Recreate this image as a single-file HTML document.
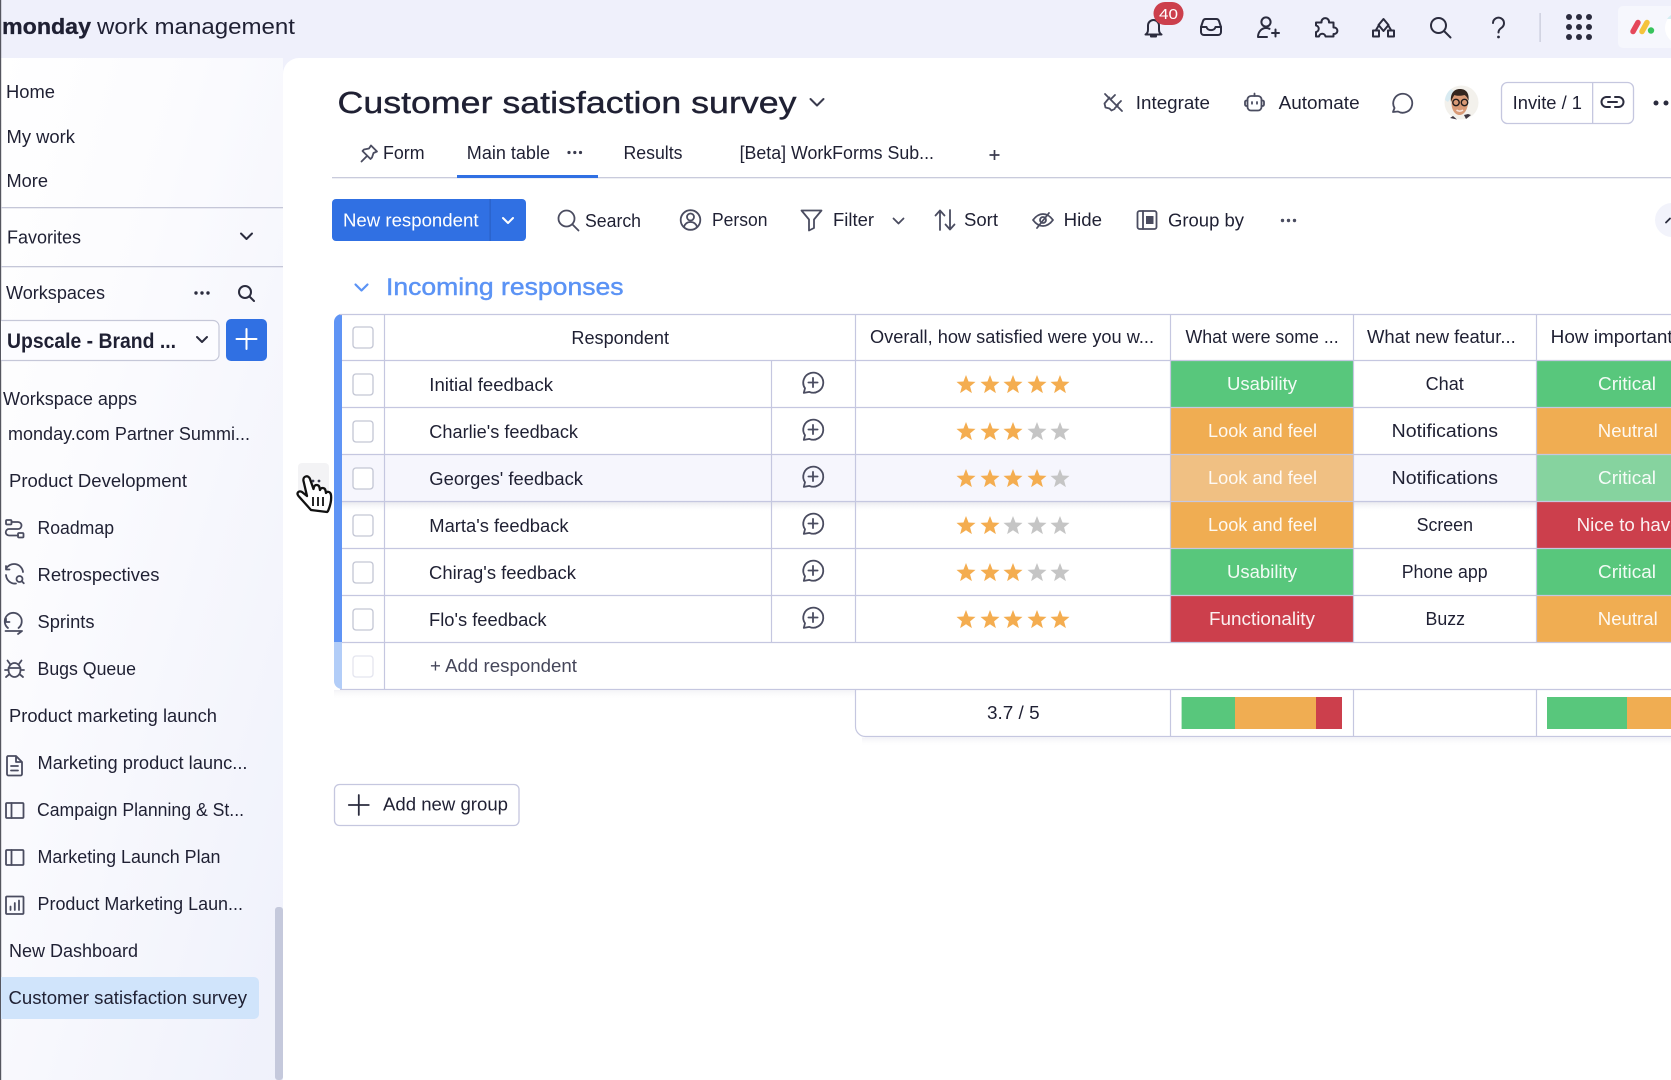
<!DOCTYPE html>
<html lang="en"><head><meta charset="utf-8"><title>Customer satisfaction survey</title>
<style>
html,body{margin:0;padding:0;background:#fff;width:1671px;height:1080px;overflow:hidden}
svg{display:block}
text{font-family:"Liberation Sans",sans-serif;font-size:18px;fill:#1f2033}
.w{fill:#fff;fill-opacity:.92}
.i{fill:none;stroke:#2b2c3e;stroke-width:2;stroke-linecap:round;stroke-linejoin:round}
.g{fill:none;stroke:#4a4c60;stroke-width:1.8;stroke-linecap:round;stroke-linejoin:round}
.l{fill:none;stroke:#c5c7e0;stroke-width:1.2}
.cb{fill:#fff;stroke:#c3c6d4;stroke-width:1.3}
.on{fill:#f4ad50}.off{fill:#c5c5c5}
</style></head><body>
<svg width="1671" height="1080" viewBox="0 0 1671 1080" xmlns="http://www.w3.org/2000/svg">
<defs>
<linearGradient id="sb" x1="0" y1="0" x2="1" y2="1"><stop offset="0" stop-color="#ffffff"/><stop offset=".35" stop-color="#fbfbfe"/><stop offset="1" stop-color="#eff1fb"/></linearGradient>
<linearGradient id="sh" x1="0" y1="0" x2="0" y2="1"><stop offset="0" stop-color="#e9e9ee"/><stop offset="1" stop-color="#ffffff" stop-opacity="0"/></linearGradient>
<linearGradient id="sh2" x1="0" y1="0" x2="0" y2="1"><stop offset="0" stop-color="#f2f2f6"/><stop offset="1" stop-color="#ffffff" stop-opacity="0"/></linearGradient>
<polygon id="star" points="0,-10 2.53,-3.48 9.51,-3.09 4.09,1.33 5.88,8.09 0,4.3 -5.88,8.09 -4.09,1.33 -9.51,-3.09 -2.53,-3.48"/>
<g id="cp" class="g"><path d="M-9.2 10.4 L-8 5.8 A10 10 0 1 1 -3.6 9.4 Z"/><path d="M0 -4.6V4.6M-4.6 0H4.6"/></g>
<g id="ck"><rect x="-10" y="-10.5" width="20" height="21" rx="3" class="cb"/></g>
</defs>

<!-- backgrounds -->
<rect width="1671" height="1080" fill="#fff"/>
<rect width="1671" height="58" fill="#eff0fb"/>
<rect y="58" width="283" height="1022" fill="url(#sb)"/>
<path d="M283 58h16a16 16 0 0 0-16 16z" fill="#eff0fb"/>
<rect x="0" y="0" width="1.2" height="1080" fill="#55565f"/>

<!-- top bar -->
<text x="2" y="34" textLength="89" lengthAdjust="spacingAndGlyphs" stroke="#1f2033" stroke-width=".3" style="font-size:22px;font-weight:700">monday</text>
<text x="97" y="34" textLength="198" lengthAdjust="spacingAndGlyphs" style="font-size:22px">work management</text>
<g class="i">
<path d="M1145.5 34.5c2-1 2.5-3 2.5-5v-4a5.5 5.5 0 0 1 11 0v4c0 2 .5 4 2.5 5z"/><path d="M1151 35v1.5h5V35"/>
<path d="M1201 27v5a3 3 0 0 0 3 3h14a3 3 0 0 0 3-3v-5l-2-6a3 3 0 0 0-3-2h-10a3 3 0 0 0-3 2z"/><path d="M1201 27h5.5a4.6 4 0 0 0 9 0h5.5"/>
<circle cx="1266" cy="22" r="4.6"/><path d="M1258 37c0-5 3.5-9 8-9 1.5 0 2.5.3 3.5.8M1258 37h9"/><path d="M1272 33h7M1275.5 29.5v7"/>
<path d="M1316 22.5h5.500a3.800 3.800 0 1 1 7.500 0h4.500v5a3.300 3.300 0 1 1 0 6.500v2.500h-8a3.300 3.300 0 0 0-6.500 0h-3v-4.500a3.300 3.300 0 0 0 0-6.500z"/>
<path d="M1383.5 19l5 6-5 6-5-6z"/><rect x="1373" y="30.5" width="6" height="6"/><rect x="1388" y="30.5" width="6" height="6"/><path d="M1376 30l3-5M1391 30l-3-5"/>
<circle cx="1438.5" cy="25.5" r="7.5"/><path d="M1444 31l6.500 6.500"/>
<path d="M1493 23a5.500 5.500 0 1 1 8.500 4.800c-2 1.300-3 2.400-3 4.700"/>
</g>
<circle cx="1498.5" cy="37" r="1.4" fill="#2b2c3e"/>
<rect x="1153.5" y="2" width="30" height="23" rx="11.5" fill="#cc3f4c"/>
<text x="1159" y="19" textLength="19" lengthAdjust="spacingAndGlyphs" style="font-size:15px;fill:#fff">40</text>
<rect x="1539.5" y="13" width="1.2" height="29" fill="#c6c8d8"/>
<g fill="#2b2c3e"><circle cx="1569" cy="17" r="3"/><circle cx="1579" cy="17" r="3"/><circle cx="1589" cy="17" r="3"/><circle cx="1569" cy="27" r="3"/><circle cx="1579" cy="27" r="3"/><circle cx="1589" cy="27" r="3"/><circle cx="1569" cy="37" r="3"/><circle cx="1579" cy="37" r="3"/><circle cx="1589" cy="37" r="3"/></g>
<path d="M1671 6h-48a5 5 0 0 0-5 5v32a5 5 0 0 0 5 5h48z" fill="#f6f7fd"/>
<path d="M1633 31.5l5-9" stroke="#e5475a" stroke-width="5.5" stroke-linecap="round"/>
<path d="M1642 31.5l5-9" stroke="#f5c33b" stroke-width="5.5" stroke-linecap="round"/>
<circle cx="1651" cy="30.5" r="3.2" fill="#37c35c"/>
<circle cx="1681" cy="28" r="16" fill="#fff"/>
<path d="M1667 19a16 16 0 0 1 8-6l2 6z" fill="#d5eef2"/>

<!-- sidebar -->
<text x="6" y="98" textLength="49" lengthAdjust="spacingAndGlyphs">Home</text>
<text x="6.5" y="143" textLength="68.500" lengthAdjust="spacingAndGlyphs">My work</text>
<text x="6.5" y="187" textLength="41.500" lengthAdjust="spacingAndGlyphs">More</text>
<rect x="1" y="207" width="282" height="1.3" fill="#c5c7d8"/>
<text x="7" y="243.5" textLength="74" lengthAdjust="spacingAndGlyphs">Favorites</text>
<path class="i" d="M241 233.5l5.500 5.500 5.500-5.500"/>
<rect x="1" y="266" width="282" height="1.3" fill="#c5c7d8"/>
<text x="6" y="299" textLength="99" lengthAdjust="spacingAndGlyphs">Workspaces</text>
<g fill="#2b2c3e"><circle cx="196" cy="293" r="1.7"/><circle cx="202" cy="293" r="1.7"/><circle cx="208" cy="293" r="1.7"/></g>
<circle cx="245" cy="292" r="6" class="i"/><path class="i" d="M249.5 296.5l4.500 4.500"/>
<path d="M1 320.5h212a6 6 0 0 1 6 6v28a6 6 0 0 1-6 6H1" fill="#fcfcff" stroke="#c5c7d8" stroke-width="1.2"/>
<text x="7" y="348" textLength="169" lengthAdjust="spacingAndGlyphs" style="font-size:21px;font-weight:700">Upscale - Brand ...</text>
<path class="i" d="M197 337l5 5 5-5"/>
<rect x="226" y="319" width="41" height="42" rx="5" fill="#3070e3"/>
<path d="M246.5 329v20M236.5 339h20" stroke="#fff" stroke-width="2" stroke-linecap="round"/>
<text x="3" y="405" textLength="134" lengthAdjust="spacingAndGlyphs">Workspace apps</text>
<text x="8" y="440" textLength="242" lengthAdjust="spacingAndGlyphs">monday.com Partner Summi...</text>
<text x="9" y="487" textLength="178" lengthAdjust="spacingAndGlyphs">Product Development</text>
<text x="37.5" y="534" textLength="76.500" lengthAdjust="spacingAndGlyphs">Roadmap</text>
<text x="37.5" y="581" textLength="122" lengthAdjust="spacingAndGlyphs">Retrospectives</text>
<text x="37.5" y="628" textLength="57" lengthAdjust="spacingAndGlyphs">Sprints</text>
<text x="37.5" y="675" textLength="98.500" lengthAdjust="spacingAndGlyphs">Bugs Queue</text>
<text x="9" y="722" textLength="208" lengthAdjust="spacingAndGlyphs">Product marketing launch</text>
<text x="37.5" y="769" textLength="210" lengthAdjust="spacingAndGlyphs">Marketing product launc...</text>
<text x="37" y="816" textLength="207" lengthAdjust="spacingAndGlyphs">Campaign Planning &amp; St...</text>
<text x="37.5" y="863" textLength="183" lengthAdjust="spacingAndGlyphs">Marketing Launch Plan</text>
<text x="37.5" y="910" textLength="205.500" lengthAdjust="spacingAndGlyphs">Product Marketing Laun...</text>
<text x="9" y="957" textLength="129" lengthAdjust="spacingAndGlyphs">New Dashboard</text>
<path d="M1 977h253a5 5 0 0 1 5 5v32a5 5 0 0 1-5 5H1z" fill="#d0e4fb"/>
<text x="8.5" y="1004" textLength="238.500" lengthAdjust="spacingAndGlyphs">Customer satisfaction survey</text>
<rect x="275" y="907" width="8" height="173" rx="3" fill="#c5c9dc"/>
<g class="g">
<!-- roadmap -->
<rect x="6" y="520" width="5.5" height="4.5" rx="1"/><path d="M11.5 522H18a3.200 3.200 0 0 1 0 7H9a3.200 3.200 0 0 0 0 6.500h9"/><rect x="18" y="533" width="5.5" height="4.5" rx="1"/>
<!-- retrospectives -->
<path d="M6 569a9 9 0 0 1 17 3M6 566v3.500h3.500M6 575a9 9 0 0 0 10 8.500"/><circle cx="19.5" cy="579" r="3"/><path d="M21.8 581.3l2 2"/>
<!-- sprints -->
<path d="M8 628a8.500 8.500 0 1 1 10.500 0"/><path d="M5.5 631h15.500M18 634l4-3"/><path d="M6 618.5v3.500h3.500"/>
<!-- bug -->
<ellipse cx="14.5" cy="670" rx="6" ry="7"/><path d="M8.5 668h12M10 664l-2.500-3.500M19 664l2.500-3.500M8.500 670H5M24 670h-3.500M9 674.500l-3 2.500M20 674.500l3 2.500"/>
<!-- doc -->
<path d="M8 756h8l6 6v12a1.500 1.500 0 0 1-1.500 1.500H8.500A1.500 1.500 0 0 1 7 774V757.500A1.500 1.500 0 0 1 8 756zM16 756v6h6M11 766h7M11 770.500h7"/>
<!-- table -->
<rect x="6" y="803" width="17.5" height="15" rx="1"/><path d="M11.5 803v15"/>
<rect x="6" y="850" width="17.5" height="15" rx="1"/><path d="M11.5 850v15"/>
<!-- chart -->
<rect x="6" y="896.5" width="17.5" height="17.5" rx="1"/><path d="M10.5 910v-3.500M14.800 910v-7M19 910v-9.500"/>
</g>

<!-- title area -->
<text x="337.5" y="113" textLength="459" lengthAdjust="spacingAndGlyphs" stroke="#1f2033" stroke-width=".4" style="font-size:31px">Customer satisfaction survey</text>
<path class="i" d="M810.5 99l6.500 6.500 6.500-6.500" style="stroke:#3a3b4e"/>
<path class="g" d="M1105 94l17 17M1115 95l-3.500 3.500M1121 101l-3.500 3.500M1109.500 97.500l-5 6 1 4 4 1 2 2 3-1.500M1118 105l-3 3"/>
<text x="1135.8" y="109" textLength="74.200" lengthAdjust="spacingAndGlyphs">Integrate</text>
<g class="g"><rect x="1247.5" y="96" width="14" height="14.5" rx="3.5"/><path d="M1254.5 96v-2.500M1247.500 100.500h-1a1.500 1.500 0 0 0-1.500 1.500v2.500a1.500 1.500 0 0 0 1.500 1.500h1M1261.500 100.500h1a1.500 1.500 0 0 1 1.500 1.500v2.500a1.500 1.500 0 0 1-1.500 1.500h-1M1252 102v1.800M1257 102v1.800"/></g>
<text x="1278.6" y="109" textLength="81" lengthAdjust="spacingAndGlyphs">Automate</text>
<path class="g" d="M1393 112l1.500-4a9.500 9.500 0 1 1 3.500 3.500z"/>
<!-- avatar -->
<circle cx="1461.5" cy="102.5" r="17" fill="#f3f1ec"/>
<path d="M1445 100a17 17 0 0 1 6-11l4 3-7 10z" fill="#d8ebf2"/>
<path d="M1451.500 103c0-8 3-12 8.500-12s8.500 4 8 12c-.5 7-4 12-8.500 12s-8-5-8-12z" fill="#d99a76"/>
<path d="M1451 102c-1-8 2.500-13 9-13 6 0 9.500 4 8.500 12-.8-3-2-5-4-6-4 1-7.500 1-10 0-1.500 2-2.500 4-3.500 7z" fill="#33261f"/>
<circle cx="1456" cy="102.5" r="3.2" fill="none" stroke="#201c1c" stroke-width="1.4"/><circle cx="1464.5" cy="102.5" r="3.2" fill="none" stroke="#201c1c" stroke-width="1.4"/>
<path d="M1456.500 110c2 1.500 4.500 1.500 6.500 0" stroke="#f7e3dc" stroke-width="1.6" fill="none"/>
<path d="M1453 116l-3 2 7 1.500zM1464 115l2 4 5-4-3-1z" fill="#3d3540"/>
<!-- invite -->
<rect x="1501.5" y="82.5" width="132" height="41" rx="6" fill="#fff" stroke="#c5c7df" stroke-width="1.3"/>
<rect x="1592" y="83" width="1.3" height="40" fill="#c5c7df"/>
<text x="1512.7" y="109" textLength="69.300" lengthAdjust="spacingAndGlyphs">Invite / 1</text>
<path class="i" d="M1610 97h-3.500a5 5 0 0 0 0 10h3.500M1615 97h3.500a5 5 0 0 1 0 10H1615M1608 102h9"/>
<circle cx="1656" cy="103" r="2.5" fill="#2b2c3e"/><circle cx="1666" cy="103" r="2.5" fill="#2b2c3e"/>

<!-- tabs -->
<g class="g"><path d="M361.500 161.500l5-5M371 145.500l6 6-3.500 1.500-1.500 4.500-1.500 1.500-8-8 1.500-1.500 5-1z"/></g>
<text x="383" y="159" textLength="41.600" lengthAdjust="spacingAndGlyphs">Form</text>
<text x="466.8" y="159" textLength="83.200" lengthAdjust="spacingAndGlyphs">Main table</text>
<g fill="#3a3b4e"><circle cx="569" cy="152.5" r="1.6"/><circle cx="574.8" cy="152.5" r="1.6"/><circle cx="580.5" cy="152.5" r="1.6"/></g>
<text x="623.5" y="159" textLength="59" lengthAdjust="spacingAndGlyphs">Results</text>
<text x="739.6" y="159" textLength="194.400" lengthAdjust="spacingAndGlyphs">[Beta] WorkForms Sub...</text>
<path d="M989.5 155h10M994.500 150v10" stroke="#3a3b4e" stroke-width="1.7"/>
<rect x="332" y="177" width="1339" height="1.3" fill="#c9cbdc"/>
<rect x="457" y="175" width="141" height="3" fill="#3070e3"/>

<!-- toolbar -->
<rect x="332" y="199" width="194" height="42" rx="4" fill="#3070e3"/>
<rect x="489.5" y="199" width="1.2" height="42" fill="#2a60c4"/>
<text x="343" y="226.5" textLength="135.500" lengthAdjust="spacingAndGlyphs" style="fill:#fff">New respondent</text>
<path d="M503 218l5 5 5-5" fill="none" stroke="#fff" stroke-width="2" stroke-linecap="round" stroke-linejoin="round"/>
<g class="g">
<circle cx="566.5" cy="218.5" r="8"/><path d="M572.5 224.500l6 6"/>
<circle cx="690.5" cy="220" r="9.8"/><circle cx="690.5" cy="217" r="3.5"/><path d="M684 227c1-3.500 3.500-5 6.500-5s5.500 1.500 6.500 5"/>
<path d="M801.5 210.500h20l-7.500 9v8.500l-5 2.500v-11z"/>
<path d="M940 230v-19M935.500 215.500l4.500-5 4.500 5M950 210v19M945.500 224.500l4.500 5 4.500-5"/>
<path d="M1033 220c3-4 6.500-6 10-6s7 2 10 6c-3 4-6.500 6-10 6s-7-2-10-6z"/><circle cx="1043" cy="220" r="3"/><path d="M1037 228l12-15"/>
<rect x="1137.5" y="211" width="19" height="18" rx="2"/><path d="M1143 211v18"/>
</g>
<rect x="1146" y="216" width="7.5" height="8" fill="#4a4c60"/>
<text x="585" y="227" textLength="56" lengthAdjust="spacingAndGlyphs">Search</text>
<text x="712" y="226" textLength="55.500" lengthAdjust="spacingAndGlyphs">Person</text>
<text x="833" y="226" textLength="41" lengthAdjust="spacingAndGlyphs">Filter</text>
<path class="g" d="M893.5 218.500l5 5 5-5"/>
<text x="964" y="226" textLength="34" lengthAdjust="spacingAndGlyphs">Sort</text>
<text x="1063.6" y="226" textLength="38.400" lengthAdjust="spacingAndGlyphs">Hide</text>
<text x="1168" y="226.5" textLength="76" lengthAdjust="spacingAndGlyphs">Group by</text>
<g fill="#4a4c60"><circle cx="1282.5" cy="220.5" r="1.7"/><circle cx="1288.5" cy="220.5" r="1.7"/><circle cx="1294.5" cy="220.5" r="1.7"/></g>
<circle cx="1672" cy="220" r="17" fill="#f2f3fb"/>
<path d="M1666 222.5l4-4" stroke="#2b2c3e" stroke-width="1.8" fill="none" stroke-linecap="round"/>

<!-- group title -->
<path d="M355.5 284.500l6 6 6-6" fill="none" stroke="#5b93f5" stroke-width="2.2" stroke-linecap="round" stroke-linejoin="round"/>
<text x="386" y="295" textLength="237.500" lengthAdjust="spacingAndGlyphs" stroke="#5b93f5" stroke-width=".45" style="font-size:24px;fill:#5b93f5">Incoming responses</text>

<!-- row highlight -->
<rect x="342" y="455" width="1329" height="46.5" fill="#f6f6fd"/>
<rect x="342" y="502" width="1329" height="10" fill="url(#sh)"/>

<!-- coloured cells -->
<rect x="1171" y="361" width="182" height="46" fill="#58c77c"/>
<rect x="1171" y="408" width="182" height="46" fill="#f0ad52"/>
<rect x="1171" y="455" width="182" height="46" fill="#f0c083"/>
<rect x="1171" y="502" width="182" height="46" fill="#f0ad52"/>
<rect x="1171" y="549" width="182" height="46" fill="#58c77c"/>
<rect x="1171" y="596" width="182" height="46" fill="#cc3f4c"/>
<rect x="1537" y="361" width="134" height="46" fill="#58c77c"/>
<rect x="1537" y="408" width="134" height="46" fill="#f0ad52"/>
<rect x="1537" y="455" width="134" height="46" fill="#86d39f"/>
<rect x="1537" y="502" width="134" height="46" fill="#cc3f4c"/>
<rect x="1537" y="549" width="134" height="46" fill="#58c77c"/>
<rect x="1537" y="596" width="134" height="46" fill="#f0ad52"/>

<!-- stripe -->
<path d="M342 314a8 8 0 0 0-8 8V642h8z" fill="#5f94f5"/>
<path d="M334 642h8v47a8 8 0 0 1-8-8z" fill="#b2cdf8"/>

<!-- grid lines -->
<path class="l" d="M340 314.500H1671M342 360.500H1671M342 407.500H1671M342 454.500H1671M342 501.500H1671M342 548.500H1671M342 595.500H1671M342 642.500H1671M340 689.500H1671"/>
<path class="l" d="M384.500 314V689M771.500 361V642M855.500 314V642M1170.500 314V642M1353.500 314V642M1536.500 314V642"/>
<rect x="334" y="690" width="521" height="10" fill="url(#sh2)"/>
<path class="l" d="M855.500 690V726.500a10 10 0 0 0 10 10H1671M1170.500 690V736M1353.500 690V736M1536.500 690V736"/>
<rect x="862" y="737.5" width="809" height="9" fill="url(#sh2)"/>

<!-- checkboxes -->
<use href="#ck" x="363" y="337.5"/><use href="#ck" x="363" y="384.5"/><use href="#ck" x="363" y="431.5"/><use href="#ck" x="363" y="478.5"/><use href="#ck" x="363" y="525.5"/><use href="#ck" x="363" y="572.5"/><use href="#ck" x="363" y="619.5"/>
<rect x="353" y="656" width="20" height="21" rx="3" fill="#fff" stroke="#e4e5ef" stroke-width="1.3"/>

<!-- headers -->
<text x="571.4" y="344" textLength="97.600" lengthAdjust="spacingAndGlyphs">Respondent</text>
<text x="870" y="343" textLength="284" lengthAdjust="spacingAndGlyphs">Overall, how satisfied were you w...</text>
<text x="1185.5" y="343" textLength="153.200" lengthAdjust="spacingAndGlyphs">What were some ...</text>
<text x="1367" y="343" textLength="148.700" lengthAdjust="spacingAndGlyphs">What new featur...</text>
<text x="1550.7" y="343" textLength="122" lengthAdjust="spacingAndGlyphs">How important</text>

<!-- names -->
<text x="429.3" y="391" textLength="123.700" lengthAdjust="spacingAndGlyphs">Initial feedback</text>
<text x="429.3" y="438" textLength="148.700" lengthAdjust="spacingAndGlyphs">Charlie's feedback</text>
<text x="429.3" y="485" textLength="153.700" lengthAdjust="spacingAndGlyphs">Georges' feedback</text>
<text x="429.3" y="532" textLength="139.300" lengthAdjust="spacingAndGlyphs">Marta's feedback</text>
<text x="429" y="579" textLength="147" lengthAdjust="spacingAndGlyphs">Chirag's feedback</text>
<text x="429" y="626" textLength="117.600" lengthAdjust="spacingAndGlyphs">Flo's feedback</text>
<text x="430" y="672" textLength="147" lengthAdjust="spacingAndGlyphs" style="fill:#45465a">+ Add respondent</text>

<!-- comment icons -->
<use href="#cp" x="813" y="382.5"/><use href="#cp" x="813" y="429.5"/><use href="#cp" x="813" y="476.5"/><use href="#cp" x="813" y="523.5"/><use href="#cp" x="813" y="570.5"/><use href="#cp" x="813" y="617.5"/>

<!-- stars -->
<use href="#star" class="on" x="966" y="385"/><use href="#star" class="on" x="990" y="385"/><use href="#star" class="on" x="1013" y="385"/><use href="#star" class="on" x="1037" y="385"/><use href="#star" class="on" x="1060" y="385"/>
<use href="#star" class="on" x="966" y="432"/><use href="#star" class="on" x="990" y="432"/><use href="#star" class="on" x="1013" y="432"/><use href="#star" class="off" x="1037" y="432"/><use href="#star" class="off" x="1060" y="432"/>
<use href="#star" class="on" x="966" y="479"/><use href="#star" class="on" x="990" y="479"/><use href="#star" class="on" x="1013" y="479"/><use href="#star" class="on" x="1037" y="479"/><use href="#star" class="off" x="1060" y="479"/>
<use href="#star" class="on" x="966" y="526"/><use href="#star" class="on" x="990" y="526"/><use href="#star" class="off" x="1013" y="526"/><use href="#star" class="off" x="1037" y="526"/><use href="#star" class="off" x="1060" y="526"/>
<use href="#star" class="on" x="966" y="573"/><use href="#star" class="on" x="990" y="573"/><use href="#star" class="on" x="1013" y="573"/><use href="#star" class="off" x="1037" y="573"/><use href="#star" class="off" x="1060" y="573"/>
<use href="#star" class="on" x="966" y="620"/><use href="#star" class="on" x="990" y="620"/><use href="#star" class="on" x="1013" y="620"/><use href="#star" class="on" x="1037" y="620"/><use href="#star" class="on" x="1060" y="620"/>

<!-- coloured text -->
<text class="w" x="1227" y="390" textLength="70" lengthAdjust="spacingAndGlyphs">Usability</text>
<text class="w" x="1208" y="437" textLength="109" lengthAdjust="spacingAndGlyphs">Look and feel</text>
<text class="w" x="1208" y="484" textLength="109" lengthAdjust="spacingAndGlyphs">Look and feel</text>
<text class="w" x="1208" y="531" textLength="109" lengthAdjust="spacingAndGlyphs">Look and feel</text>
<text class="w" x="1227" y="578" textLength="70" lengthAdjust="spacingAndGlyphs">Usability</text>
<text class="w" x="1209" y="625" textLength="106" lengthAdjust="spacingAndGlyphs">Functionality</text>
<text x="1425.6" y="390" textLength="38.200" lengthAdjust="spacingAndGlyphs">Chat</text>
<text x="1391.7" y="437" textLength="106.300" lengthAdjust="spacingAndGlyphs">Notifications</text>
<text x="1391.7" y="484" textLength="106.300" lengthAdjust="spacingAndGlyphs">Notifications</text>
<text x="1416.6" y="531" textLength="56.400" lengthAdjust="spacingAndGlyphs">Screen</text>
<text x="1401.7" y="578" textLength="85.900" lengthAdjust="spacingAndGlyphs">Phone app</text>
<text x="1425.5" y="625" textLength="39.500" lengthAdjust="spacingAndGlyphs">Buzz</text>
<text class="w" x="1598" y="390" textLength="58" lengthAdjust="spacingAndGlyphs">Critical</text>
<text class="w" x="1597.8" y="437" textLength="59.900" lengthAdjust="spacingAndGlyphs">Neutral</text>
<text class="w" x="1598" y="484" textLength="58" lengthAdjust="spacingAndGlyphs">Critical</text>
<text class="w" x="1576.6" y="531" textLength="104" lengthAdjust="spacingAndGlyphs">Nice to have</text>
<text class="w" x="1598" y="578" textLength="58" lengthAdjust="spacingAndGlyphs">Critical</text>
<text class="w" x="1597.8" y="625" textLength="59.900" lengthAdjust="spacingAndGlyphs">Neutral</text>

<!-- summary -->
<text x="987" y="719" textLength="52.600" lengthAdjust="spacingAndGlyphs">3.7 / 5</text>
<rect x="1181.6" y="697" width="53.400" height="32" fill="#58c77c"/>
<rect x="1235" y="697" width="81" height="32" fill="#f0ad52"/>
<rect x="1316" y="697" width="26" height="32" fill="#cc3f4c"/>
<rect x="1547" y="697" width="80" height="32" fill="#58c77c"/>
<rect x="1627" y="697" width="44" height="32" fill="#f0ad52"/>

<!-- add new group -->
<rect x="334.5" y="784.5" width="184.500" height="41" rx="5" fill="#fff" stroke="#c5c7df" stroke-width="1.3"/>
<path d="M358.8 795v20M348.800 805h20" stroke="#2b2c3e" stroke-width="1.8" stroke-linecap="round"/>
<text x="383" y="810.5" textLength="125" lengthAdjust="spacingAndGlyphs">Add new group</text>

<!-- hover handle + cursor -->
<rect x="298" y="463" width="31" height="38" rx="4" fill="#f3f3f5"/>
<circle cx="313" cy="481" r="1.4" fill="#3a3b4e"/><circle cx="319" cy="481" r="1.4" fill="#3a3b4e"/>
<path d="M311 510 L298.500 496c-2.500-3 .5-6 3.500-4l5 4-3.500-15c-1-5 5-6.500 6.500-2l3.500 10 .5-2c1-3 5-2.500 5.500.5l.5 2.500c1-3 5-2.500 5.500.5l.5 2.500c1-2 4.500-1.500 5 2 .5 4 0 9-3 16l-1 1z" fill="#fff" stroke="#111" stroke-width="2.3" stroke-linejoin="round"/>
<path d="M313 497v9M318 497v9M323 497v9" stroke="#111" stroke-width="1.8"/>
</svg>
</body></html>
